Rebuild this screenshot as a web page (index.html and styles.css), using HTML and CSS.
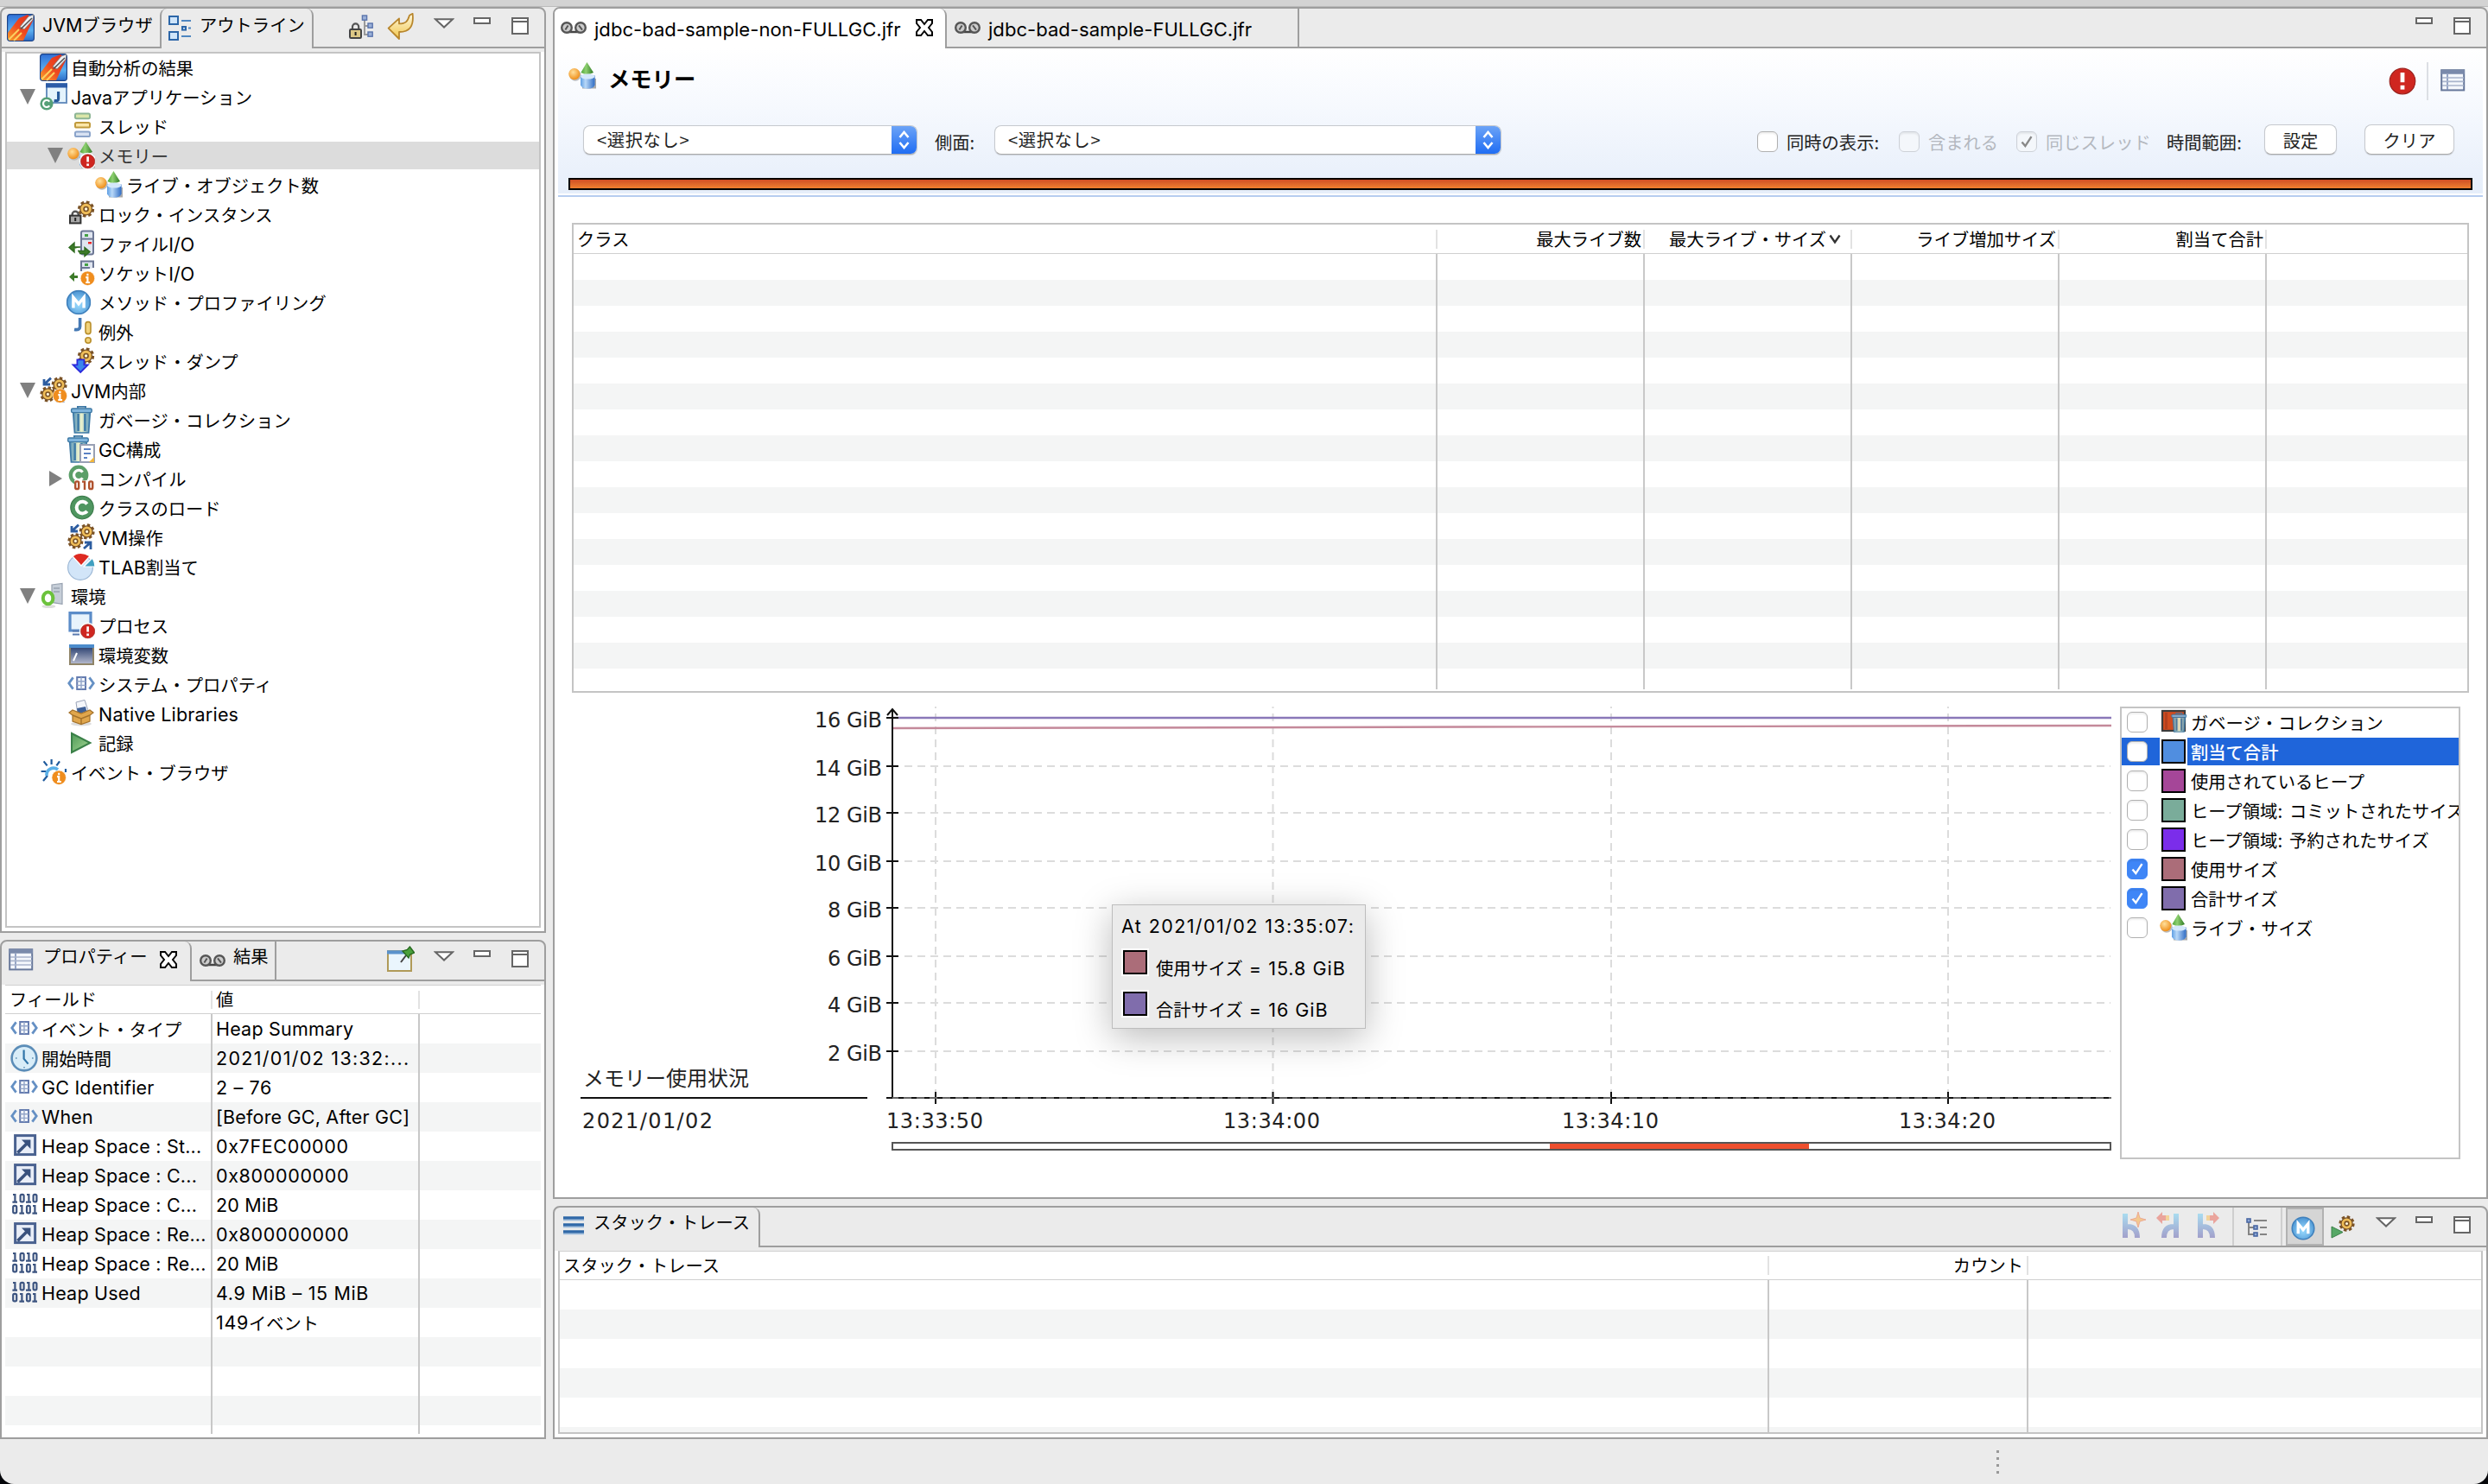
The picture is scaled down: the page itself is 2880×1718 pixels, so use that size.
FILE: index.html
```html
<!DOCTYPE html>
<html lang="ja">
<head>
<meta charset="utf-8">
<title>JDK Mission Control</title>
<link rel="stylesheet" href="styles.css">
</head>
<body>
<svg class="defs" aria-hidden="true">
  <defs>
    <linearGradient id="gFlame" x1="1" y1="0" x2="0" y2="1"><stop offset="0" stop-color="#e02a1c"/><stop offset=".55" stop-color="#ee4a1f"/><stop offset="1" stop-color="#f9a02c"/></linearGradient>
    <linearGradient id="gSky" x1="0" y1="0" x2="0" y2="1"><stop offset="0" stop-color="#2f6fd6"/><stop offset=".6" stop-color="#5cb0f0"/><stop offset="1" stop-color="#2b6bc8"/></linearGradient>
    <linearGradient id="gCan" x1="0" y1="0" x2="1" y2="0"><stop offset="0" stop-color="#4f8fb8"/><stop offset=".5" stop-color="#ecf2cc"/><stop offset="1" stop-color="#4f8fb8"/></linearGradient>
    <linearGradient id="gArrow" x1="0" y1="0" x2="0" y2="1"><stop offset="0" stop-color="#fff9e0"/><stop offset="1" stop-color="#f1c64c"/></linearGradient>
    <linearGradient id="gH" x1="0" y1="0" x2="0" y2="1"><stop offset="0" stop-color="#a9dcf0"/><stop offset="1" stop-color="#a2a0cb"/></linearGradient>
    <linearGradient id="gTerm" x1="0" y1="0" x2="0" y2="1"><stop offset="0" stop-color="#1f3668"/><stop offset="1" stop-color="#b9bdd0"/></linearGradient>
    <linearGradient id="gPlay" x1="0" y1="0" x2="1" y2="1"><stop offset="0" stop-color="#4f9a58"/><stop offset="1" stop-color="#a6d894"/></linearGradient>
    <linearGradient id="gCyl" x1="0" y1="0" x2="1" y2="0"><stop offset="0" stop-color="#5f9fe4"/><stop offset=".35" stop-color="#b8d8f8"/><stop offset="1" stop-color="#2f6cc4"/></linearGradient>
    <linearGradient id="gCone" x1="0" y1="0" x2="1" y2="0"><stop offset="0" stop-color="#4aa438"/><stop offset=".4" stop-color="#8ed070"/><stop offset="1" stop-color="#2f7a24"/></linearGradient>
    <radialGradient id="gOrange" cx=".4" cy=".35" r=".7"><stop offset="0" stop-color="#ffdf9a"/><stop offset="1" stop-color="#ee8a12"/></radialGradient>
    <radialGradient id="gM" cx=".5" cy=".6" r=".6"><stop offset="0" stop-color="#9bdcff"/><stop offset="1" stop-color="#4a93d2"/></radialGradient>
  </defs>
  <symbol id="i-jmc" viewBox="0 0 16 16"><rect x=".3" y=".3" width="15.4" height="15.4" rx="1.6" fill="url(#gSky)" stroke="#1d4488" stroke-width=".6"/><path d="M.5 11 7 2.500 12 .5 15.500 3 12.500 9 9.500 15.500H1.500L.5 14z" fill="url(#gFlame)"/><path d="M1 15 7 9M4 15.500 8.500 11" stroke="#fbd060" stroke-width="1"/><path d="M7.500 7.500 12.500 1.500 15.500.5 15 3.500 10 9z" fill="#f0f0f2" stroke="#777" stroke-width=".4"/><path d="M8 8.800 14.500 2.500" stroke="#555" stroke-width=".8"/></symbol>
  <symbol id="i-outline" viewBox="0 0 16 16"><g fill="#cfe5fa" stroke="#2c66a8"><rect x="1.500" y="1.500" width="5" height="4.500"/><rect x="1.500" y="10.500" width="5" height="4.500"/><rect x="9" y="7.500" width="2" height="1.800"/></g><path d="M8.500 4H14M8.500 13H14M12.500 8.300H14" stroke="#4e86c0"/></symbol>
  <symbol id="i-locktree" viewBox="0 0 16 16"><path d="M10 3v9.500h3M10 7.500h3" stroke="#9a9a9a" fill="none"/><g fill="#9ab0d8" stroke="#5a74ac" stroke-width=".7"><rect x="8.700" y="1.500" width="2.600" height="2.600"/><rect x="12" y="6" width="2.600" height="2.600"/><rect x="12" y="11" width="2.600" height="2.600"/></g><path d="M3 9.500V8a1.800 1.800 0 0 1 3.600 0v1.500" fill="none" stroke="#555" stroke-width="1.100"/><rect x="1.500" y="9.500" width="6.500" height="5" rx=".6" fill="#ddc886" stroke="#444"/><path d="M4.800 11v2" stroke="#222"/></symbol>
  <symbol id="i-back" viewBox="0 0 16 16"><path d="M.8 8.800 7 3.200v3c4 0 5-1.500 6-4.800l1.800-1c.8 7-1.500 10.600-7.800 10.600v4z" fill="url(#gArrow)" stroke="#b8862c" stroke-width=".9" stroke-linejoin="round"/></symbol>
  <symbol id="i-java" viewBox="0 0 16 16"><rect x="4" y=".5" width="11.500" height="11" fill="#e4f3fc" stroke="#6b92c0"/><path d="M3.500 1.500H16" stroke="#2c5ca8" stroke-width="2.600"/><path d="M10.800 5v4.200q0 1.500-2.500 1" fill="none" stroke="#2a5c9c" stroke-width="1.600"/><circle cx="4" cy="12" r="3.800" fill="#56a077"/><path d="M5.600 10.800A2 2 0 1 0 5.600 13.200" fill="none" stroke="#fff" stroke-width="1.100"/></symbol>
  <symbol id="i-threads" viewBox="0 0 16 16"><rect x="4.500" y=".8" width="8.500" height="2.800" rx=".8" fill="#dbe6a8" stroke="#8db595"/><rect x="4.500" y="6" width="8.500" height="2.800" rx=".8" fill="#fbe6a8" stroke="#c09a3c"/><rect x="4.500" y="11.200" width="8.500" height="2.800" rx=".8" fill="#d8e2f2" stroke="#8ba4ca"/></symbol>
  <symbol id="i-shapes" viewBox="0 0 16 16"><path d="M8 14.500h7.800V9.500" fill="none" stroke="#aaa" stroke-width="1.400"/><circle cx="4" cy="7.600" r="3.300" fill="#bbb"/><circle cx="3.400" cy="6.800" r="3.300" fill="url(#gOrange)"/><path d="M10.700 0 14.500 6q-3.700 2-7.300 0z" fill="url(#gCone)"/><path d="M7 7.800h8.300v5.400q-1 2.200-4.100 2.200T7 13.200z" fill="url(#gCyl)"/><ellipse cx="11.150" cy="8.300" rx="4.100" ry="1.500" fill="#d4e8fb"/></symbol>
  <symbol id="i-err" viewBox="0 0 16 16"><circle cx="8" cy="8" r="7.400" fill="#cf2620" stroke="#9c2420" stroke-width=".6"/><path d="M8 3v5.600" stroke="#fff" stroke-width="2.400"/><rect x="6.800" y="10.400" width="2.400" height="2.400" fill="#fff"/></symbol>
  <symbol id="i-info" viewBox="0 0 16 16"><circle cx="8" cy="8" r="7.700" fill="#ef8d1e" stroke="#fff" stroke-width=".6"/><path d="M8 3v2.200M6 7h2v5.500M6 12.500h4.500" fill="none" stroke="#fff" stroke-width="2"/></symbol>
  <symbol id="i-memerr" viewBox="0 0 16 16"><use href="#i-shapes"/><circle cx="11.800" cy="11.300" r="4.900" fill="#fff"/><use href="#i-err" x="7.400" y="7" width="8.800" height="8.800"/></symbol>
  <symbol id="i-gear" viewBox="0 0 16 16"><circle cx="8" cy="8" r="6.500" fill="none" stroke="#7a5226" stroke-width="2.400" stroke-dasharray="2.900 2.205"/><circle cx="8" cy="8" r="5.500" fill="#efbd58" stroke="#7a5226" stroke-width="1.100"/><circle cx="8" cy="8" r="2" fill="#fff6da" stroke="#7a5226" stroke-width="1.300"/></symbol>
  <symbol id="i-lockgear" viewBox="0 0 16 16"><use href="#i-gear" x="5.800" y="0" width="10" height="10"/><path d="M2.800 9.500V8.200a1.800 1.800 0 0 1 3.600 0v1.300" fill="none" stroke="#555" stroke-width="1.200"/><rect x="1.500" y="8.800" width="6.200" height="4.400" fill="#a8a8a8" stroke="#333"/><path d="M4.600 10v2" stroke="#222"/></symbol>
  <symbol id="i-file" viewBox="0 0 16 16"><rect x="8" y=".8" width="7" height="13.400" rx="1" fill="#dfe5f0" stroke="#6c7795"/><path d="M8 5.300h7" stroke="#6c7795"/><rect x="10" y="2.500" width="2" height="1.500" fill="#44a044"/><rect x="12" y="7" width="2" height="1.200" fill="#e22"/><path d="M7.500 10H4V7.500L1 10.200 4 13v-2M6 12.200h4v-2l3 2.500-3 2.600v-1.500H7" fill="#3c7a28" stroke="#2f6a20" stroke-width=".7"/></symbol>
  <symbol id="i-socket" viewBox="0 0 16 16"><path d="M8 7V1.200h7V5" fill="#dfe5f0" stroke="#6c7795"/><path d="M8 5h5" stroke="#6c7795"/><rect x="10" y="2.500" width="2" height="1.500" fill="#44a044"/><path d="M6 9.500H4V7.500L1 10.200 4 13v-2h2" fill="#3c7a28"/><use href="#i-info" x="7.400" y="6.800" width="8.600" height="8.600"/></symbol>
  <symbol id="i-m" viewBox="0 0 16 16"><circle cx="8" cy="8" r="7.300" fill="url(#gM)" stroke="#3f80bc" stroke-width=".9"/><path d="M4.700 11.500V5l3.300 4 3.300-4v6.500" fill="none" stroke="#fff" stroke-width="1.900"/></symbol>
  <symbol id="i-exc" viewBox="0 0 16 16"><path d="M7.300 0v5q0 2.300-3.300 1.700" fill="none" stroke="#4579b4" stroke-width="1.800"/><rect x="10.500" y="2.300" width="3" height="7" rx="1.400" fill="#f2d27a" stroke="#b98f2c" stroke-width=".8"/><circle cx="12" cy="13" r="1.600" fill="#f2d27a" stroke="#b98f2c" stroke-width=".8"/></symbol>
  <symbol id="i-dump" viewBox="0 0 16 16"><use href="#i-gear" x="5.800" y="0" width="10" height="10"/><path d="M5.700 7.200h4v3h2.200L7.600 14.500 3.300 10.200h2.400z" fill="#3a86ee" stroke="#2a28dc" stroke-width=".9"/></symbol>
  <symbol id="i-vm" viewBox="0 0 16 16"><path d="M6.500.8 2.500 4.500M2.500 1.500v3H6M9.500 14.500 13.500 11M13.500 15v-4H10" stroke="#2c5ca0" stroke-width="1.400" fill="none"/><use href="#i-gear" x="6.600" y="0" width="9.400" height="9.400"/><use href="#i-gear" x="0" y="5.500" width="9.400" height="9.400"/></symbol>
  <symbol id="i-vminfo" viewBox="0 0 16 16"><use href="#i-vm"/><use href="#i-info" x="7.400" y="6.800" width="8.600" height="8.600"/></symbol>
  <symbol id="i-can" viewBox="0 0 16 16"><path d="M3.300 3.500h9.900l-.9 12H4.200z" fill="url(#gCan)" stroke="#3d78a4" stroke-width=".8"/><path d="M6.300 4.500v10M10.200 4.500v10" stroke="#3f7ca8" stroke-width="1.300"/><rect x="2.300" y="1.500" width="11.800" height="2.300" rx=".8" fill="#7fb4dc" stroke="#3d78a4" stroke-width=".7"/><path d="M6 1.300V.4h4.500v.9" fill="none" stroke="#3d78a4"/></symbol>
  <symbol id="i-gccfg" viewBox="0 0 16 16"><use href="#i-can" x="-2" width="16" height="16"/><rect x="7.500" y="5.500" width="8" height="10" fill="#fff" stroke="#98a0b4"/><path d="M9.500 8h4M9.500 10.500h4M9.500 13h2" stroke="#5b82c4"/><path d="m12.500 15.500 3-3v3z" fill="#f2b63c"/></symbol>
  <symbol id="i-c" viewBox="0 0 16 16"><circle cx="8.500" cy="7.800" r="6.600" fill="#4f9660" stroke="#3d7d4c" stroke-width=".6"/><path d="M11.400 5.700A3.400 3.400 0 1 0 11.400 9.900" fill="none" stroke="#fff" stroke-width="2"/></symbol>
  <symbol id="i-compile" viewBox="0 0 16 16"><circle cx="6.500" cy="6" r="5.700" fill="#5b9f68"/><path d="M8.800 4.300A2.800 2.800 0 1 0 8.800 7.700" fill="none" stroke="#fff" stroke-width="1.600"/><path d="M4 9h11v6H4z" fill="#fff"/><g fill="none" stroke="#b0522e" stroke-width="1.200"><rect x="4.600" y="9.700" width="2" height="4.300" rx=".8"/><path d="M8.500 9.800H10v4.700"/><rect x="12.600" y="9.700" width="2" height="4.300" rx=".8"/></g></symbol>
  <symbol id="i-tlab" viewBox="0 0 16 16"><ellipse cx="7.500" cy="8.500" rx="7.200" ry="7.200" fill="#d2e5f8" stroke="#9fb9d6" stroke-width=".6"/><path d="M8 7.500 3 2Q7-1.500 13 1.800z" fill="#dd2a22" stroke="#fff" stroke-width=".6"/><path d="M9.500 8 14.500 3q1.500 2.500 1.500 5z" fill="#3f9fc0" stroke="#fff" stroke-width=".6"/></symbol>
  <symbol id="i-env" viewBox="0 0 16 16"><path d="m7 1.500 6-.8v12l-6-1z" fill="#c6ced8" stroke="#98a2b0" stroke-width=".6"/><path d="M8 3.500h3.500M8 5.500h3.500" stroke="#98a2b0" stroke-width=".8"/><ellipse cx="5.200" cy="14" rx="4" ry="1" fill="#ddd"/><ellipse cx="4.800" cy="9.200" rx="2.900" ry="3.400" fill="none" stroke="#6cc23c" stroke-width="2"/></symbol>
  <symbol id="i-proc" viewBox="0 0 16 16"><path d="M1.500.8h12V11h-12z" fill="#e8f3fc" stroke="#5b8cc8" stroke-width="1.600"/><path d="M3 13.300h4M3 11.300h4" stroke="#5a7ab0"/><circle cx="11.800" cy="11.300" r="4.900" fill="#fff"/><use href="#i-err" x="7.400" y="7" width="8.800" height="8.800"/></symbol>
  <symbol id="i-term" viewBox="0 0 16 16"><rect x="1.500" y="2.500" width="13.500" height="11" fill="url(#gTerm)" stroke="#8f8468"/><path d="M1 3H15.500" stroke="#4c8ccc" stroke-width="2"/><path d="m5.500 7-2 4.500" stroke="#fff"/></symbol>
  <symbol id="i-prop" viewBox="0 0 16 16"><path d="M3.300 4.200.9 7.500 3.300 10.800M12.700 4.200 15.100 7.500 12.700 10.800" fill="none" stroke="#6590c4" stroke-width="1.400"/><rect x="5.600" y="4" width="4.900" height="7" fill="#f2f6fb" stroke="#667db0"/><path d="M8 4v7M5.600 6.400h4.900M5.600 8.700h4.900" stroke="#93a5c8" stroke-width=".7"/></symbol>
  <symbol id="i-lib" viewBox="0 0 16 16"><ellipse cx="8" cy="14" rx="6" ry="1.300" fill="#ddd"/><path d="m5 1.500 5-1.300 2 6-6 2z" fill="#f4f6fa" stroke="#9aa4b8" stroke-width=".5"/><path d="m5.500 5 5-1 .6 2.500-5 2z" fill="#3d5f96"/><path d="M1 7.500 3 6l5 2 5-2 2 1.500-2 1.500v3.500l-5 1.800-5-1.800V9z" fill="#e0a64c" stroke="#a4722a" stroke-width=".6"/><path d="m3 9 5 2 5-2M8 11v3" stroke="#a4722a" stroke-width=".7" fill="none"/></symbol>
  <symbol id="i-play" viewBox="0 0 16 16"><path d="M2.500 2.500 13.200 8 2.500 13.500z" fill="url(#gPlay)" stroke="#3a8048"/></symbol>
  <symbol id="i-event" viewBox="0 0 16 16"><path d="M6.800.5v3M2.300 1.700l2 2.500M11.500 1.700 9.700 4.200M.8 7.500h3M2 13l2.500-3M15 6v2" stroke="#1e5a9c" stroke-width="1.100"/><path d="M10.500 6.500A4 4 0 0 0 4 10" fill="none" stroke="#5ab0e8" stroke-width="1.800"/><use href="#i-info" x="6.800" y="6.800" width="8.600" height="8.600"/></symbol>
  <symbol id="i-clock" viewBox="0 0 16 16"><circle cx="8" cy="8" r="7.200" fill="#d9edf8" stroke="#5b8db8" stroke-width="1.300"/><path d="M7.800 3.300v5l2.500 3" fill="none" stroke="#2f74a8" stroke-width="1.100"/><path d="M3 8h.8M12.500 8h.8M8 13v.8" stroke="#7aa6c4"/></symbol>
  <symbol id="i-addr" viewBox="0 0 16 16"><rect x="2.800" y="1.800" width="11.500" height="11" fill="#e9eef8" stroke="#4a6290" stroke-width="1.500"/><path d="M6.500 4.300h5.200v5.200z" fill="#3a527e"/><path d="m4.200 11.700 5.500-5.500" stroke="#3a527e" stroke-width="1.800"/></symbol>
  <symbol id="i-bin" viewBox="0 0 16 16"><g fill="none" stroke="#3c5480" stroke-width="1.100"><path d="M1.500 2H2.700V6.300M1.200 6.300H4M9.500 2h1.200v4.300M9 6.300h3M5.500 8.500H6.700v4.300M5.200 12.800H8M13 8.500h1.200v4.300M12.700 12.800H15.500"/><rect x="5.800" y="1.900" width="2" height="4.300" rx=".8"/><rect x="13.300" y="1.900" width="1.900" height="4.300" rx=".8"/><rect x="1.600" y="8.400" width="2" height="4.300" rx=".8"/><rect x="9.500" y="8.400" width="1.900" height="4.300" rx=".8"/></g></symbol>
  <symbol id="i-table" viewBox="0 0 16 16"><rect x="1.600" y="2.100" width="13" height="11.600" fill="#f4f7fc" stroke="#66779a"/><path d="M1.200 3.200H15" stroke="#7a8aab" stroke-width="2.400"/><path d="M5 4.500v9" stroke="#7e90b8" stroke-width=".8"/><path d="M2 6.500h12.500M2 8.700h12.500M2 11h12.500" stroke="#a9b5cc" stroke-width=".8"/></symbol>
  <symbol id="i-tape" viewBox="0 0 16 8"><path d="M4 6.500h8" stroke="#444" stroke-width="1.200"/><g fill="#ccc" stroke="#555" stroke-width="1.200"><circle cx="4" cy="4" r="2.900"/><circle cx="12" cy="4" r="2.900"/></g><path d="m3.200 5.300 1.600-2.600M11 2.700l2 2.600" stroke="#555"/></symbol>
  <symbol id="i-close" viewBox="0 0 20 20"><path d="M1 1h5l4 5 4-5h5v4l-4 5 4 5v4h-5l-4-5-4 5H1v-4l4-5-4-5z" fill="#fff" stroke="#000" stroke-width="2"/></symbol>
  <symbol id="i-pin" viewBox="0 0 16 16"><rect x=".5" y="3" width="13.500" height="11.500" fill="#eaf5fd" stroke="#b09a58"/><path d="M0 3.700H13" stroke="#5a92cc" stroke-width="2.200"/><path d="m8 9.500 3-4" stroke="#444"/><path d="M9 3 12.500 7l.8-2 2.500-1-2.600-3.500-1.500 1.700z" fill="#4aa03c" stroke="#276a20" stroke-width=".7"/></symbol>
  <symbol id="i-menu" viewBox="0 0 24 12"><path d="M2 1.200h20L12 10.600z" fill="#fff" stroke="#666" stroke-width="2"/></symbol>
  <symbol id="i-min" viewBox="0 0 20 8"><rect x="1" y="1" width="18" height="6" fill="#fff" stroke="#666" stroke-width="2"/></symbol>
  <symbol id="i-max" viewBox="0 0 20 20"><path d="M1 1h18v18H1zM1 5h18" fill="#fff" stroke="#666" stroke-width="2"/></symbol>
  <symbol id="i-stack" viewBox="0 0 24 22"><path d="M0 2h24M0 10h24M0 18h24" stroke="#2f68a8" stroke-width="3.400"/><path d="M0 4.500h24M0 12.500h24M0 20.500h24" stroke="#9dbbdc" stroke-width="1.600"/></symbol>
  <symbol id="i-h" viewBox="0 0 20 28"><path d="M3 0v28M3 15h3q11 0 11 13" fill="none" stroke="url(#gH)" stroke-width="6"/></symbol>
  <symbol id="i-hnew" viewBox="0 0 28 32"><use href="#i-h" x="0" y="2" width="20" height="28"/><path d="m18 0 2 7 7 2-7 2-2 7-2-7-7-2 7-2z" fill="#f3c88e" stroke="#eba08c" stroke-width=".8"/></symbol>
  <symbol id="i-hback" viewBox="0 0 28 32"><g transform="matrix(-1 0 0 1 26 0)"><use href="#i-h" x="0" y="2" width="20" height="28"/></g><path d="M0 7 7 0v4h8v6H7v4z" fill="#eaa49c"/><path d="M11 4h4v6h-4z" fill="#f3d39a"/></symbol>
  <symbol id="i-hfwd" viewBox="0 0 28 32"><use href="#i-h" x="0" y="2" width="20" height="28"/><path d="M25 7 18 0v4h-8v6h8v4z" fill="#eaa49c"/><path d="M10 4h4v6h-4z" fill="#f3d39a"/></symbol>
  <symbol id="i-tree" viewBox="0 0 24 22"><path d="M3 5v14h7M3 11h7M9 3h15M16 11h8M16 19h8" fill="none" stroke="#848484" stroke-width="2"/><g fill="#8ea8d4" stroke="#4a68a4" stroke-width="1.600"><rect x="1" y="1" width="4" height="4"/><rect x="9" y="9" width="4" height="4"/><rect x="9" y="17" width="4" height="4"/></g></symbol>
  <symbol id="i-rungear" viewBox="0 0 28 28"><use href="#i-gear" x="9" y="0" width="19" height="19"/><path d="M1 13 14 19.500 1 26z" fill="#56a866" stroke="#3a8048"/></symbol>
  <symbol id="i-gcband" viewBox="0 0 32 32"><rect x="3" y="3" width="26" height="23" fill="#d04c20" stroke="#3c3c3c" stroke-width="2.200"/><path d="M7.500 5v19" stroke="#b4401e" stroke-width="3"/><use href="#i-can" x="10.500" y="5" width="23" height="23" opacity=".9"/></symbol>
  <symbol id="i-check" viewBox="0 0 24 24"><path d="m6 12.500 4.200 5L18 5.500" fill="none" stroke="currentColor" stroke-width="2.600"/></symbol>
</svg>

<div class="strip"></div>
<main class="workbench">
  <div class="side">
    <section class="panel outline">
      <div class="bar">
        <div class="tab t-jvm"><svg class="i32"><use href="#i-jmc"/></svg><span><b class="la">JVM</b>ブラウザ</span></div>
        <div class="tab active t-out"><svg class="i32"><use href="#i-outline"/></svg><span>アウトライン</span></div>
        <div class="tools">
          <svg class="i32 mr12"><use href="#i-locktree"/></svg><svg class="i32 mr20"><use href="#i-back"/></svg>
          <svg class="menu"><use href="#i-menu"/></svg><svg class="min"><use href="#i-min"/></svg><svg class="max"><use href="#i-max"/></svg>
        </div>
      </div>
      <div class="content">
        <ul class="tree">
          <li class="l0"><i></i><svg class="i32"><use href="#i-jmc"/></svg><span>自動分析の結果</span></li>
          <li class="l0"><i class="down"></i><svg class="i32"><use href="#i-java"/></svg><span><b class="la">Java</b>アプリケーション</span></li>
          <li class="l1"><i></i><svg class="i32"><use href="#i-threads"/></svg><span>スレッド</span></li>
          <li class="l1 sel"><i class="down"></i><svg class="i32"><use href="#i-memerr"/></svg><span>メモリー</span></li>
          <li class="l2"><i></i><svg class="i32"><use href="#i-shapes"/></svg><span>ライブ・オブジェクト数</span></li>
          <li class="l1"><i></i><svg class="i32"><use href="#i-lockgear"/></svg><span>ロック・インスタンス</span></li>
          <li class="l1"><i></i><svg class="i32"><use href="#i-file"/></svg><span>ファイル<b class="la">I/O</b></span></li>
          <li class="l1"><i></i><svg class="i32"><use href="#i-socket"/></svg><span>ソケット<b class="la">I/O</b></span></li>
          <li class="l1"><i></i><svg class="i32 m-ic"><use href="#i-m"/></svg><span>メソッド・プロファイリング</span></li>
          <li class="l1"><i></i><svg class="i32"><use href="#i-exc"/></svg><span>例外</span></li>
          <li class="l1"><i></i><svg class="i32"><use href="#i-dump"/></svg><span>スレッド・ダンプ</span></li>
          <li class="l0"><i class="down"></i><svg class="i32"><use href="#i-vminfo"/></svg><span><b class="la">JVM</b>内部</span></li>
          <li class="l1"><i></i><svg class="i32"><use href="#i-can"/></svg><span>ガベージ・コレクション</span></li>
          <li class="l1"><i></i><svg class="i32"><use href="#i-gccfg"/></svg><span><b class="la">GC</b>構成</span></li>
          <li class="l1"><i class="right"></i><svg class="i32"><use href="#i-compile"/></svg><span>コンパイル</span></li>
          <li class="l1"><i></i><svg class="i32"><use href="#i-c"/></svg><span>クラスのロード</span></li>
          <li class="l1"><i></i><svg class="i32"><use href="#i-vm"/></svg><span><b class="la">VM</b>操作</span></li>
          <li class="l1"><i></i><svg class="i32"><use href="#i-tlab"/></svg><span><b class="la">TLAB</b>割当て</span></li>
          <li class="l0"><i class="down"></i><svg class="i32"><use href="#i-env"/></svg><span>環境</span></li>
          <li class="l1"><i></i><svg class="i32"><use href="#i-proc"/></svg><span>プロセス</span></li>
          <li class="l1"><i></i><svg class="i32"><use href="#i-term"/></svg><span>環境変数</span></li>
          <li class="l1"><i></i><svg class="i32"><use href="#i-prop"/></svg><span>システム・プロパティ</span></li>
          <li class="l1"><i></i><svg class="i32"><use href="#i-lib"/></svg><span><b class="la nl">Native Libraries</b></span></li>
          <li class="l1"><i></i><svg class="i32"><use href="#i-play"/></svg><span>記録</span></li>
          <li class="l0"><i></i><svg class="i32"><use href="#i-event"/></svg><span>イベント・ブラウザ</span></li>
        </ul>
      </div>
    </section>

    <section class="panel props">
      <div class="bar">
        <div class="tab active t-prop"><svg class="i32"><use href="#i-table"/></svg><span>プロパティー</span><svg class="close"><use href="#i-close"/></svg></div>
        <div class="tab t-res"><svg class="tape"><use href="#i-tape"/></svg><span>結果</span></div>
        <div class="tools">
          <svg class="i32 mr20"><use href="#i-pin"/></svg>
          <svg class="menu"><use href="#i-menu"/></svg><svg class="min"><use href="#i-min"/></svg><svg class="max"><use href="#i-max"/></svg>
        </div>
      </div>
      <div class="content">
        <div class="ptable">
          <div class="phead"><div>フィールド</div><div>値</div></div>
          <div class="prow"><div><svg class="i32"><use href="#i-prop"/></svg>イベント・タイプ</div><div class="la">Heap Summary</div></div>
          <div class="prow"><div><svg class="i32"><use href="#i-clock"/></svg>開始時間</div><div class="la date">2021/01/02 13:32:...</div></div>
          <div class="prow"><div class="la"><svg class="i32"><use href="#i-prop"/></svg>GC Identifier</div><div class="la num">2 – 76</div></div>
          <div class="prow"><div class="la"><svg class="i32"><use href="#i-prop"/></svg>When</div><div class="la">[Before GC, After GC]</div></div>
          <div class="prow"><div class="la"><svg class="i32"><use href="#i-addr"/></svg>Heap Space : St...</div><div class="la num">0x7FEC00000</div></div>
          <div class="prow"><div class="la"><svg class="i32"><use href="#i-addr"/></svg>Heap Space : C...</div><div class="la num">0x800000000</div></div>
          <div class="prow"><div class="la"><svg class="i32"><use href="#i-bin"/></svg>Heap Space : C...</div><div class="la">20 MiB</div></div>
          <div class="prow"><div class="la"><svg class="i32"><use href="#i-addr"/></svg>Heap Space : Re...</div><div class="la num">0x800000000</div></div>
          <div class="prow"><div class="la"><svg class="i32"><use href="#i-bin"/></svg>Heap Space : Re...</div><div class="la">20 MiB</div></div>
          <div class="prow"><div class="la"><svg class="i32"><use href="#i-bin"/></svg>Heap Used</div><div class="la num">4.9 MiB – 15 MiB</div></div>
          <div class="prow"><div></div><div><b class="la num">149</b>イベント</div></div>
          <div class="prow"><div></div><div></div></div>
          <div class="prow"><div></div><div></div></div>
          <div class="prow"><div></div><div></div></div>
          <div class="prow"><div></div><div></div></div>
        </div>
      </div>
    </section>
  </div>

  <div class="center">
    <section class="panel editor">
      <div class="bar">
        <div class="tab active t-e1"><svg class="tape"><use href="#i-tape"/></svg><span class="la">jdbc-bad-sample-non-FULLGC.jfr</span><svg class="close"><use href="#i-close"/></svg></div>
        <div class="tab t-e2"><svg class="tape"><use href="#i-tape"/></svg><span class="la">jdbc-bad-sample-FULLGC.jfr</span></div>
        <div class="tools"><svg class="min"><use href="#i-min"/></svg><svg class="max"><use href="#i-max"/></svg></div>
      </div>
      <div class="page">
        <header class="head">
          <div class="title"><svg class="i32"><use href="#i-shapes"/></svg><h1>メモリー</h1><svg class="i32 err"><use href="#i-err"/></svg><em></em><svg class="i32 tbl"><use href="#i-table"/></svg></div>
          <div class="filter">
            <div class="combo c1"><span>&lt;選択なし&gt;</span><svg viewBox="0 0 28 34"><path d="m9 14 5-6 5 6M9 20l5 6 5-6" fill="none" stroke="#fff" stroke-width="2.600"/></svg></div>
            <label class="side-l">側面:</label>
            <div class="combo c2"><span>&lt;選択なし&gt;</span><svg viewBox="0 0 28 34"><path d="m9 14 5-6 5 6M9 20l5 6 5-6" fill="none" stroke="#fff" stroke-width="2.600"/></svg></div>
            <div class="opts">
              <i class="cb"></i><span class="o1">同時の表示:</span>
              <i class="cb dis"></i><span class="o2">含まれる</span>
              <i class="cb dis"><svg><use href="#i-check"/></svg></i><span class="o3">同じスレッド</span>
              <span class="o4">時間範囲:</span>
              <button class="b1">設定</button><button class="b2">クリア</button>
            </div>
          </div>
          <div class="range"></div>
        </header>
        <div class="grid">
          <div class="ghead"><div>クラス</div><div>最大ライブ数</div><div>最大ライブ・サイズ<svg class="sort" viewBox="0 0 14 12"><path d="m1.500 1.500 5.500 8 5.500-8" fill="none" stroke="#333" stroke-width="2.400"/></svg></div><div>ライブ増加サイズ</div><div>割当て合計</div></div>
          <div class="gbody"><div></div><div></div><div></div><div></div><div></div></div>
        </div>
        <div class="lower">
          <div class="chartbox">
            <svg class="chart" viewBox="662 810 1788 540" width="1788" height="540">
              <g stroke="#dcdcdc" stroke-width="2" stroke-dasharray="9 6">
                <path d="M1047 887H2443M1047 941H2443M1047 997H2443M1047 1051H2443M1047 1107H2443M1047 1161H2443M1047 1217H2443"/>
                <path d="M1083 1270V818M1473.500 1270V818M1865 1270V818M2255 1270V818"/>
              </g>
              <path d="M1034 843 1300 842.500 1700 841.500 2444 840" fill="none" stroke="#c4899a" stroke-width="2.400"/>
              <path d="M1034 831H2444" stroke="#8a78b8" stroke-width="2.400"/>
              <g stroke="#111" stroke-width="2" fill="none">
                <path d="M1033 1272V822M1027 828l6-7 6 7"/>
                <path d="M1026 831h14M1026 887h14M1026 941h14M1026 997h14M1026 1051h14M1026 1107h14M1026 1161h14M1026 1217h14M1026 1271h14"/>
                <path d="M1083 1264v14M1473.500 1264v14M1865 1264v14M2255 1264v14"/>
                <path d="M672 1271H1004"/>
              </g>
              <path d="M1033 1271H2444" stroke="#666" stroke-width="2"/>
              <path d="M1040 1271H2444" stroke="#111" stroke-width="2.200" stroke-dasharray="6 9"/>
              <g class="axis" text-anchor="end">
                <text x="1021" y="842" textLength="78">16 GiB</text><text x="1021" y="898" textLength="78">14 GiB</text>
                <text x="1021" y="952" textLength="78">12 GiB</text><text x="1021" y="1008" textLength="78">10 GiB</text>
                <text x="1021" y="1062" textLength="63">8 GiB</text><text x="1021" y="1118" textLength="63">6 GiB</text>
                <text x="1021" y="1172" textLength="63">4 GiB</text><text x="1021" y="1228" textLength="63">2 GiB</text>
              </g>
              <g class="axis">
                <text x="674" y="1306" textLength="151">2021/01/02</text>
                <text x="1026" y="1306" textLength="112">13:33:50</text><text x="1416" y="1306" textLength="112">13:34:00</text>
                <text x="1808" y="1306" textLength="112">13:34:10</text><text x="2198" y="1306" textLength="112">13:34:20</text>
                <text class="jp" x="675" y="1257" textLength="192">メモリー使用状況</text>
              </g>
              <path d="M1794 1323h300v8h-300z" fill="#ee4f2e"/>
              <rect x="1033" y="1323" width="1410" height="8" fill="none" stroke="#555" stroke-width="2"/>
            </svg>
            <div class="tip">
              <p class="la">At 2021/01/02 13:35:07:</p>
              <p><i class="sw used"></i><span>使用サイズ<b class="la"> = 15.8 GiB</b></span></p>
              <p><i class="sw total"></i><span>合計サイズ<b class="la"> = 16 GiB</b></span></p>
            </div>
          </div>
          <ul class="legend">
            <li><i class="cb"></i><svg class="i32"><use href="#i-gcband"/></svg><span>ガベージ・コレクション</span></li>
            <li class="sel"><i class="cb"></i><i class="sw alloc"></i><span>割当て合計</span></li>
            <li><i class="cb"></i><i class="sw heap"></i><span>使用されているヒープ</span></li>
            <li><i class="cb"></i><i class="sw comm"></i><span>ヒープ領域<b class="la">: </b>コミットされたサイズ</span></li>
            <li><i class="cb"></i><i class="sw resv"></i><span>ヒープ領域<b class="la">: </b>予約されたサイズ</span></li>
            <li><i class="cb on"><svg><use href="#i-check"/></svg></i><i class="sw used"></i><span>使用サイズ</span></li>
            <li><i class="cb on"><svg><use href="#i-check"/></svg></i><i class="sw total"></i><span>合計サイズ</span></li>
            <li><i class="cb"></i><svg class="i32"><use href="#i-shapes"/></svg><span>ライブ・サイズ</span></li>
          </ul>
        </div>
      </div>
    </section>

    <section class="panel trace">
      <div class="bar">
        <div class="tab active t-st"><svg class="stack"><use href="#i-stack"/></svg><span>スタック・トレース</span></div>
        <div class="tools">
          <svg class="hx h1st"><use href="#i-hnew"/></svg><svg class="hx"><use href="#i-hback"/></svg><svg class="hx"><use href="#i-hfwd"/></svg>
          <em></em><svg class="tr"><use href="#i-tree"/></svg><em></em>
          <div class="pressed"><svg><use href="#i-m"/></svg></div><svg class="rg"><use href="#i-rungear"/></svg>
          <svg class="menu"><use href="#i-menu"/></svg><svg class="min"><use href="#i-min"/></svg><svg class="max"><use href="#i-max"/></svg>
        </div>
      </div>
      <div class="content">
        <div class="sgrid">
          <div class="shead"><div>スタック・トレース</div><div>カウント</div></div>
          <div class="sbody"><div></div><div></div></div>
        </div>
      </div>
    </section>
  </div>
</main>
<footer class="status"><i></i><i></i><i></i><i></i></footer>
</body>
</html>
```
FILE: styles.css
```css
* { box-sizing: border-box; }
html { background: #05060a; }
body {
  margin: 0; width: 2880px; height: 1718px; overflow: hidden;
  display: flex; flex-direction: column;
  background: #ebebeb; border-radius: 0 0 16px 16px;
  font: 20.3px/32px "Noto Sans CJK JP", sans-serif; color: #000; white-space: nowrap;
}
ul, p, h1 { margin: 0; padding: 0; list-style: none; }
svg { display: block; flex: none; }
.defs { position: absolute; width: 0; height: 0; }
.la { font-family: Inter, "Noto Sans CJK JP", sans-serif; font-size: 21.5px; font-weight: 400; white-space: pre; }
.num { letter-spacing: .65px; }
.date { letter-spacing: 1.3px; }
.nl { letter-spacing: .2px; }
.i32 { width: 32px; height: 32px; }

.strip { height: 8px; background: #d3d3d3; border-bottom: 1px solid #bbb; flex: none; }
.workbench { display: flex; gap: 8px; height: 1658px; flex: none; }
.side { width: 632px; display: flex; flex-direction: column; gap: 8px; }
.center { flex: 1; display: flex; flex-direction: column; gap: 8px; min-width: 0; }
.panel { border: 2px solid #9e9e9e; border-radius: 8px 8px 0 0; display: flex; flex-direction: column; overflow: hidden; }
.outline { height: 1072px; }
.props { height: 578px; }
.editor { height: 1380px; }
.trace { height: 270px; }

/* tab bars */
.bar { display: flex; height: 46px; flex: none; }
.tab { display: flex; border-bottom: 2px solid #9e9e9e; }
.tab.active { border-bottom: 0; border-right: 2px solid #9e9e9e; border-top-right-radius: 8px; }
.tab + .tab.active { border-left: 2px solid #9e9e9e; border-top-left-radius: 8px; }
.tools { flex: 1; display: flex; justify-content: flex-end; border-bottom: 2px solid #9e9e9e; padding-right: 18px; }
.mr12 { margin-right: 14px; }
.mr20 { margin-right: 22px; }
.tools .i32 { margin-top: 5px; }
.menu { width: 24px; height: 12px; margin: 11px 22px 0 0; }
.min { width: 20px; height: 8px; margin: 10px 24px 0 0; }
.max { width: 20px; height: 20px; margin-top: 10px; }
.t-jvm { width: 183px; padding: 6px 0 0 6px; gap: 9px; }
.t-jvm span, .t-out span { line-height: 24px; }
.t-out { width: 178px; padding: 6px 0 0 6px; gap: 6px; }
.t-prop { width: 220px; padding: 0 0 0 6px; }
.t-prop .i32 { margin: 5px 10px 0 0; }
.t-prop .close { margin-left: 15px; }
.close { width: 20px; height: 20px; margin-top: 11px; }
.t-prop > span, .t-res > span { line-height: 33px; }
.t-res { width: 98px; border-right: 2px solid #9e9e9e; padding-left: 8px; }
.tape { width: 32px; height: 16px; }
.t-res .tape { margin: 14px 8px 0 0; }
.t-e1 { width: 454px; background: #fff; padding-left: 6px; }
.t-e2 { width: 408px; border-right: 2px solid #9e9e9e; padding-left: 8px; }
.t-e1 .tape, .t-e2 .tape { margin: 14px 8px 0 0; }
.t-e1 > span, .t-e2 > span { line-height: 48px; font-size: 22.1px; }
.t-e1 .close { margin: 12px 0 0 17px; }
.t-st { width: 238px; padding-left: 10px; }
.stack { width: 24px; height: 22px; margin: 10px 11px 0 0; }
.t-st > span { line-height: 32px; }

.content { flex: 1; border-top: 4px solid #ebebeb; background: #fff; padding: 0 4px 4px; display: flex; min-height: 0; }

/* outline tree */
.tree { flex: 1; border: 2px solid #c4c4c4; }
.tree li { height: 32px; margin-bottom: 2px; display: flex; align-items: center; }
.tree li > i { width: 18px; margin-right: 5px; flex: none; display: flex; }
.l0 { padding-left: 15px; } .l1 { padding-left: 47px; } .l2 { padding-left: 79px; }
.tree .i32 { margin-right: 4px; }
.tree i.down::before { content: ""; border: 9px solid transparent; border-top: 18px solid #808080; border-bottom: 0; }
.tree i.right::before { content: ""; border: 9px solid transparent; border-left: 15px solid #808080; border-right: 0; margin-left: 2px; }
.tree .m-ic { transform: translateX(-3px) scale(.92); }
.tree .sel { background: #dcdcdc; color: #333; }

/* properties table */
.ptable { flex: 1; border-top: 1px solid #d0d0d0; overflow: hidden; }
.phead, .prow { display: grid; grid-template-columns: 240px 240px 1fr; }
.phead { height: 33px; border-bottom: 1px solid #d0d0d0; align-items: center; }
.phead > div { height: 21px; line-height: 18px; padding-left: 5px; border-right: 2px solid #e2e2e2; }
.prow { height: 34px; }
.prow:nth-child(odd) { background: #f4f5f5; }
.prow > div { border-right: 2px solid #c8c8c8; padding: 0 0 1px 6px; display: flex; align-items: center; min-width: 0; line-height: 30px; }
.prow > div + div, .phead > div + div { padding-left: 4px; }
.prow > .la:not(.num):not(.date) { letter-spacing: .2px; }
.prow .i32 { margin-right: 4px; }

/* editor page */
.page { flex: 1; background: #fff; padding: 0 4px; }
.head { height: 172px; border-bottom: 2px solid #b7cdf0; padding: 16px 12px 0; background: linear-gradient(#fff, #f6f9fe 40%, #e6eefa) 0 0 / 100% 168px no-repeat; }
.title { display: flex; height: 32px; align-items: center; }
.title h1 { font-size: 25.3px; line-height: 32px; font-weight: 700; margin: 0 auto 0 14px; padding-top: 3px; }
.title .err { margin: 12px 12px 0 0; }
.title em { width: 2px; height: 44px; background: #dcdfe4; margin: 12px 12px 0 0; flex: none; }
.title .tbl { margin: 10px 7px 0 0; }
.filter { display: flex; height: 34px; margin-top: 41px; padding-left: 17px; }
.combo { height: 34px; border: 1px solid #c6c9ce; border-bottom-color: #aaa; border-radius: 8px; background: #fff; display: flex; justify-content: space-between; overflow: hidden; color: #222; box-shadow: 0 1px 1px #0002; }
.combo span { padding-left: 15px; line-height: 31px; letter-spacing: .6px; }
.combo svg { width: 29px; height: 34px; margin-top: -1px; background: linear-gradient(#6ea5f7, #1d6bf3); }
.c1 { width: 387px; } .c2 { width: 587px; }
.side-l { width: 89px; padding-left: 20px; line-height: 38px; color: #222; }
.opts { display: flex; margin: 0 21px 0 auto; color: #222; line-height: 38px; }
.cb { width: 24px; height: 24px; border: 1px solid #b0b0b0; border-radius: 6px; background: #fff; box-shadow: inset 0 2px 2px #0001; flex: none; display: block; }
.cb svg { width: 22px; height: 22px; }
.cb.on { background: #3f86f7; border-color: #3f86f7; color: #fff; }
.opts .cb { margin: 7px 10px 0 0; }
.cb.dis { background: #f4f7fb; border-color: #cdd1d8; color: #888; }
.o1 { width: 130px; } .o2 { width: 102px; color: #b4b8bf; } .o3 { width: 140px; color: #b4b8bf; } .o4 { width: 113px; }
button { font: inherit; line-height: 30px; height: 35px; padding: 0; margin-top: -1px; border: 1px solid #c6c9ce; border-bottom-color: #aaa; border-radius: 8px; background: #fff; color: #222; box-shadow: 0 1px 1px #0002; }
.b1 { width: 84px; margin-right: 32px; } .b2 { width: 104px; }
.range { height: 14px; margin-top: 27px; border: 2px solid #000; background: linear-gradient(#cf4e24, #ef8030); }

/* class histogram */
.grid { margin: 30px 16px 0; height: 544px; border: 2px solid #c4c4c4; display: flex; flex-direction: column; padding-bottom: 2px; }
.ghead, .gbody { display: grid; grid-template-columns: 1000px 240px 240px 240px 240px 1fr; }
.ghead { height: 34px; border-bottom: 1px solid #d0d0d0; align-items: center; }
.ghead > div { height: 22px; line-height: 20px; border-right: 2px solid #e2e2e2; display: flex; justify-content: flex-end; padding-right: 2px; }
.ghead > div:first-child { justify-content: flex-start; padding-left: 4px; }
.sort { width: 16px; height: 12px; margin: 5px 8px 0 2px; }
.gbody { flex: 1; background: repeating-linear-gradient(#fff 0 30px, #f4f5f5 30px 60px); }
.gbody > div, .sbody > div { border-right: 2px solid #c8c8c8; }

/* chart and legend */
.lower { display: flex; padding: 8px 0 0 16px; align-items: flex-start; }
.chartbox { position: relative; width: 1792px; }
.axis { font: 24px "DejaVu Sans", sans-serif; fill: #222; }
.axis .jp { font-family: "Noto Sans CJK JP", sans-serif; }
.tip { position: absolute; left: 625px; top: 237px; width: 294px; height: 144px; background: #ebebeb; border: 1px solid #bdbdbd; padding: 8px 10px; box-shadow: 0 10px 40px #0004; }
.tip p { display: flex; height: 48px; align-items: flex-start; }
.tip p:first-child { height: 42px; letter-spacing: 1.4px; }
.tip span { padding: 6px 0 0 8px; }
.tip b { letter-spacing: 1px; }
.sw { width: 32px; height: 32px; border: 2px solid #fff; background: #000; padding: 2px; display: block; flex: none; }
.sw::before { content: ""; display: block; height: 24px; background: var(--c); }
.used { --c: #ab6d79; } .total { --c: #806dac; } .alloc { --c: #508ee0; } .heap { --c: #a54698; } .comm { --c: #7aac9a; } .resv { --c: #7b2dea; }
.legend { width: 394px; height: 524px; margin-top: 8px; border: 2px solid #c4c4c4; overflow: hidden; }
.legend li { height: 32px; margin-bottom: 2px; display: flex; align-items: center; padding-left: 6px; }
.legend .cb { margin-right: 14px; }
.legend li span { margin-left: 4px; }
.legend .la { letter-spacing: .8px; }
.legend .sel { background: #1f65da; color: #fff; font-weight: 500; }

/* stack trace */
.hx { width: 28px; height: 32px; margin: 5px 20px 0 0; }
.hx.h1st { margin-right: 11px; }
.trace .tools em { width: 2px; background: #cfcfcf; }
.trace .tools .hx + em { margin-left: -8px; }
.tr { width: 24px; height: 22px; margin: 12px 16px 0 14px; }
.pressed { width: 44px; height: 44px; margin: 0 8px 0 4px; border: 2px solid #b2b2b2; background: #d5d5d5; padding: 8px 0 0 4px; }
.pressed svg { width: 28px; height: 28px; }
.rg { width: 28px; height: 28px; margin: 9px 24px 0 0; }
.sgrid { flex: 1; border: 2px solid #c4c4c4; border-top: 1px solid #d0d0d0; display: flex; flex-direction: column; }
.shead, .sbody { display: grid; grid-template-columns: 1400px 300px 1fr; }
.shead { height: 33px; border-bottom: 1px solid #d0d0d0; align-items: center; }
.shead > div { height: 22px; line-height: 20px; padding: 0 4px; border-right: 2px solid #e2e2e2; }
.shead > div + div { text-align: right; }
.sbody { flex: 1; background: repeating-linear-gradient(#fff 0 34px, #f4f5f5 34px 68px); }

.status { flex: 1; padding: 13px 0 0 2311px; }
.status i { display: block; width: 3px; height: 3px; background: #999; margin-bottom: 5px; }
```
